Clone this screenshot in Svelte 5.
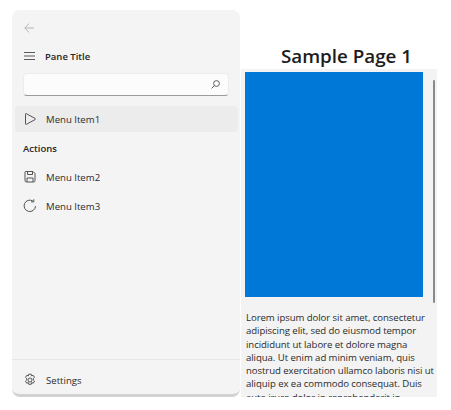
<script>
    const lines = [
        "Lorem ipsum dolor sit amet, consectetur",
        "adipiscing elit, sed do eiusmod tempor",
        "incididunt ut labore et dolore magna",
        "aliqua. Ut enim ad minim veniam, quis",
        "nostrud exercitation ullamco laboris nisi ut",
        "aliquip ex ea commodo consequat. Duis",
        "aute irure dolor in reprehenderit in"
    ];
</script>

<div class="window">
    <nav class="pane">
        <div class="back">
            <svg width="10" height="10" viewBox="0 0 10 10" fill="none" stroke="#b4b4b4" stroke-width="1">
                <path d="M10 5H1M5 .6.8 5 5 9.4" />
            </svg>
        </div>
        <div class="title-row">
            <svg width="11" height="10" viewBox="0 0 11 10" stroke="#5a5a5a" stroke-width="1">
                <path d="M0 1.5H11M0 5H11M0 8.5H11" />
            </svg>
            <span class="pane-title">Pane Title</span>
        </div>
        <div class="search">
            <svg width="9" height="9" viewBox="0 0 9 9" fill="none" stroke="#5c5c5c" stroke-width="1">
                <circle cx="5.5" cy="3.5" r="2.9" />
                <path d="M3.5 5.5.6 8.4" />
            </svg>
        </div>
        <div class="item selected">
            <svg class="icon" width="14" height="14" viewBox="0 0 14 14" fill="none" stroke="#555" stroke-width="1">
                <path d="M2.5 2.2v9.6a.6.6 0 0 0 .9.5l8.8-4.8a.6.6 0 0 0 0-1L3.4 1.7a.6.6 0 0 0-.9.5z" />
            </svg>
            <span>Menu Item1</span>
        </div>
        <div class="header">Actions</div>
        <div class="item">
            <svg class="icon" width="14" height="14" viewBox="0 0 14 14" fill="none" stroke="#555" stroke-width="1">
                <path d="M2.5 1.500h7.500L12 3.500v7a1.500 1.500 0 0 1-1.500 1.500h-7A1.500 1.500 0 0 1 2 10.500V2a.5.5 0 0 1 .5-.5z" />
                <path d="M4.500 1.500v3h5v-3M4 12V8h6v4" />
            </svg>
            <span>Menu Item2</span>
        </div>
        <div class="item">
            <svg class="icon" width="14" height="14" viewBox="0 0 14 14" fill="none" stroke="#555" stroke-width="1">
                <path d="M12.500 7A5.700 5.700 0 1 1 10 2.100" />
                <path d="M10.800.3v2.600H8" />
            </svg>
            <span>Menu Item3</span>
        </div>
        <div class="footer">
            <div class="item">
                <svg class="icon" width="14" height="14" viewBox="0 0 14 14" fill="none" stroke="#555" stroke-width="1">
                    <circle cx="7" cy="7" r="2" />
                    <path d="M5.800 1.200h2.400l.4 1.700 1.600-.6 1.300 2-1.300 1.200.1 1.500 1.200 1.100-1.200 2.100-1.700-.6-.4 1.700H5.800l-.4-1.700-1.700.6-1.200-2.100 1.200-1.100.1-1.500-1.300-1.200 1.300-2 1.600.6z" />
                </svg>
                <span>Settings</span>
            </div>
        </div>
    </nav>
    <main class="page">
        <h1>Sample Page 1</h1>
        <div class="scroller">
            <div class="blue"></div>
            <p>
                {#each lines as line}
                    <span class="line">{line}</span>
                {/each}
            </p>
            <div class="thumb"></div>
        </div>
    </main>
</div>

<style>
    :global(body) {
        background: #ffffff;
        overflow: hidden;
    }

    .window {
        display: flex;
        width: 451px;
        height: 410px;
        box-sizing: border-box;
        padding: 10px 14px 13px 12px;
        column-gap: 1px;
        font-family: "Open Sans", "Noto Sans", sans-serif;
        color: #262626;
        overflow: hidden;
    }

    .pane {
        width: 228px;
        flex: none;
        display: flex;
        flex-direction: column;
        box-sizing: border-box;
        background: #f4f4f4;
        border-radius: 8px;
        border-bottom: 3px solid #d2d2d2;
        padding: 0 2px 0 3px;
    }

    .back {
        height: 34px;
        padding: 6px 0 0 9px;
        box-sizing: border-box;
    }

    .title-row {
        display: flex;
        align-items: center;
        height: 24px;
        padding-left: 9px;
        column-gap: 10px;
    }

    .pane-title {
        font-size: 9.500px;
        font-weight: 600;
    }

    .search {
        display: flex;
        align-items: center;
        justify-content: flex-end;
        height: 21px;
        margin: 5px 9px 0 8px;
        padding-right: 8px;
        background: #fcfcfc;
        border: 1px solid #ececec;
        border-bottom: 1px solid #9a9a9a;
        border-radius: 4px;
    }

    .item {
        display: flex;
        align-items: center;
        height: 26px;
        margin-bottom: 3px;
        padding-left: 8px;
        column-gap: 9px;
        border-radius: 4px;
        font-size: 9.600px;
        color: #2b2b2b;
    }

    .selected {
        background: #ececec;
        margin-top: 10px;
    }

    .header {
        height: 29px;
        padding: 7px 0 0 8px;
        box-sizing: border-box;
        font-size: 9.500px;
        font-weight: 600;
    }

    .footer {
        margin: auto -2px 0 -3px;
        padding: 7px 2px 0 3px;
        border-top: 1px solid #e6e6e6;
    }

    .footer .item {
        margin-bottom: 1px;
    }

    .page {
        flex: 1;
        min-width: 0;
        display: flex;
        flex-direction: column;
        align-items: stretch;
    }

    h1 {
        margin: 0;
        height: 59px;
        box-sizing: border-box;
        padding: 33px 0 0 15px;
        text-align: center;
        font-size: 18.800px;
        line-height: 27px;
        font-weight: 600;
        color: #1c1c1c;
    }

    .scroller {
        position: relative;
        flex: 1;
        background: #f3f3f3;
        padding: 3px 0 0 4px;
        overflow: hidden;
    }

    .blue {
        width: 178px;
        height: 225px;
        background: #0078d7;
    }

    p {
        margin: 14px 0 0 1px;
        font-size: 9.600px;
        letter-spacing: -0.07px;
        line-height: 13.300px;
        color: #2b2b2b;
    }

    .line {
        display: block;
        white-space: nowrap;
    }

    .thumb {
        position: absolute;
        top: 11px;
        right: 2px;
        width: 2px;
        height: 223px;
        background: #8a8a8a;
        border-radius: 1px;
    }
</style>
